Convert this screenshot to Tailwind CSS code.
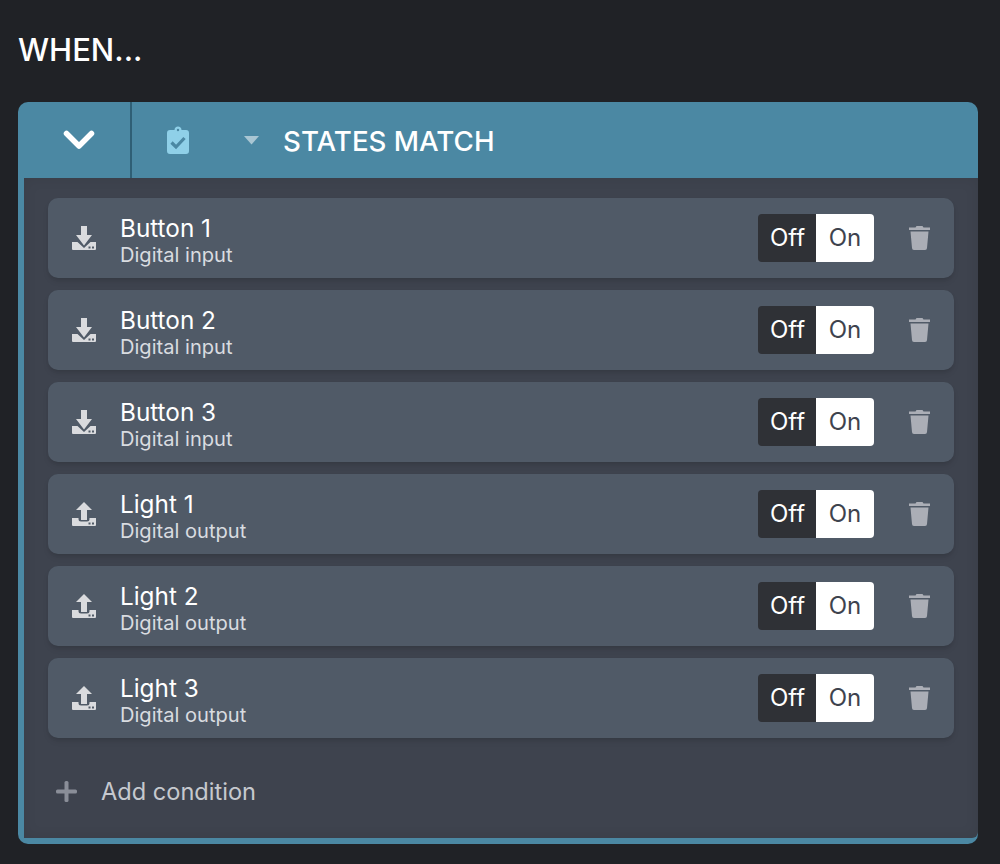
<!DOCTYPE html>
<html lang="en">
<head>
  <meta charset="UTF-8">
  <title>When states match</title>
  <script src="https://cdn.jsdelivr.net/npm/@tailwindcss/browser@4"></script>
</head>
<body class="bg-[#202226] h-[864px] overflow-hidden font-['Inter',sans-serif] text-white">
  <div class="h-[102px] px-[18px] pt-[31px]">
    <h1 class="text-[31px] leading-[38px] font-[550]">WHEN...</h1>
  </div>

  <div class="mx-[18px] w-[960px] h-[742px] rounded-[10px] bg-[#4b88a3] flex flex-col overflow-hidden">
    <!-- header -->
    <div class="h-[76px] flex items-center shrink-0">
      <div class="w-[114px] h-full pl-[10px] flex items-center justify-center border-r-2 border-[#2f5f75]">
        <svg width="32" height="20" viewBox="0 0 32 20" fill="none" stroke="#fff" stroke-width="5.500" stroke-linecap="round" stroke-linejoin="round"><path d="M3.500 3.500 16 16 28.500 3.500"/></svg>
      </div>
      <svg class="ml-[35px]" width="22" height="28" viewBox="0 0 22 28"><path fill="#8fd0e8" fill-rule="evenodd" d="M7.500 4C7.500 2 9 .5 11 .5S14.500 2 14.500 4H19a3 3 0 0 1 3 3v18a3 3 0 0 1-3 3H3a3 3 0 0 1-3-3V7a3 3 0 0 1 3-3ZM11 2.800a1.200 1.200 0 1 0 0 2.400 1.200 1.200 0 0 0 0-2.400Z"/><path fill="none" stroke="#4b88a3" stroke-width="3.200" d="m4.500 16.500 4.500 4.500 8.500-9"/></svg>
      <svg class="ml-[55px]" width="16" height="10" viewBox="0 0 16 10"><path fill="#a9c6d3" d="M0 1h15L7.500 9.500Z"/></svg>
      <span class="ml-[23px] pt-[3px] text-[27.700px] leading-none font-[550]">STATES MATCH</span>
    </div>

    <!-- body -->
    <div class="ml-[6px] mb-[6px] flex-1 bg-[#3e434e] pt-[20px] pl-[24px] pr-[24px] rounded-br-[6px] shadow-[inset_0_0_14px_rgba(0,0,0,0.08)]">
      <div class="flex flex-col gap-[12px]">

        <div class="h-[80px] rounded-[10px] bg-[#505a67] shadow-md flex items-center pl-[24px] pr-[24px]">
          <svg width="24" height="24" viewBox="0 0 24 24" fill="#dadbde"><path d="M9 0h6v9h5l-8 10.500L4 9h5Z"/><path fill-rule="evenodd" d="M0 16h5.500l6.500 6 6.500-6H24v7a1 1 0 0 1-1 1H1a1 1 0 0 1-1-1ZM16.500 20.500h2v2h-2ZM20 20.500h2v2h-2Z"/></svg>
          <div class="ml-[24px] pt-[4px] flex-1">
            <div class="text-[24.300px] leading-[30px] text-white">Button 1</div>
            <div class="text-[20.100px] leading-[24px] text-[#d9dce0]">Digital input</div>
          </div>
          <div class="flex h-[48px] w-[116px] text-[24px]">
            <div class="w-[58px] pl-[1px] flex items-center justify-center bg-[#2f3136] rounded-l-[4px] text-white">Off</div>
            <div class="w-[58px] flex items-center justify-center bg-white rounded-r-[4px] text-[#3e434e]">On</div>
          </div>
          <svg class="ml-[35px]" width="21" height="24" viewBox="0 0 21 24" fill="#abaeb6"><path d="M7.500 0h6l1 1.500h6.500V4H0V1.500h6.500Z"/><path d="M1.500 5.500h18L18 22a2 2 0 0 1-2 2H5a2 2 0 0 1-2-2Z"/></svg>
        </div>

        <div class="h-[80px] rounded-[10px] bg-[#505a67] shadow-md flex items-center pl-[24px] pr-[24px]">
          <svg width="24" height="24" viewBox="0 0 24 24" fill="#dadbde"><path d="M9 0h6v9h5l-8 10.500L4 9h5Z"/><path fill-rule="evenodd" d="M0 16h5.500l6.500 6 6.500-6H24v7a1 1 0 0 1-1 1H1a1 1 0 0 1-1-1ZM16.500 20.500h2v2h-2ZM20 20.500h2v2h-2Z"/></svg>
          <div class="ml-[24px] pt-[4px] flex-1">
            <div class="text-[24.300px] leading-[30px] text-white">Button 2</div>
            <div class="text-[20.100px] leading-[24px] text-[#d9dce0]">Digital input</div>
          </div>
          <div class="flex h-[48px] w-[116px] text-[24px]">
            <div class="w-[58px] pl-[1px] flex items-center justify-center bg-[#2f3136] rounded-l-[4px] text-white">Off</div>
            <div class="w-[58px] flex items-center justify-center bg-white rounded-r-[4px] text-[#3e434e]">On</div>
          </div>
          <svg class="ml-[35px]" width="21" height="24" viewBox="0 0 21 24" fill="#abaeb6"><path d="M7.500 0h6l1 1.500h6.500V4H0V1.500h6.500Z"/><path d="M1.500 5.500h18L18 22a2 2 0 0 1-2 2H5a2 2 0 0 1-2-2Z"/></svg>
        </div>

        <div class="h-[80px] rounded-[10px] bg-[#505a67] shadow-md flex items-center pl-[24px] pr-[24px]">
          <svg width="24" height="24" viewBox="0 0 24 24" fill="#dadbde"><path d="M9 0h6v9h5l-8 10.500L4 9h5Z"/><path fill-rule="evenodd" d="M0 16h5.500l6.500 6 6.500-6H24v7a1 1 0 0 1-1 1H1a1 1 0 0 1-1-1ZM16.500 20.500h2v2h-2ZM20 20.500h2v2h-2Z"/></svg>
          <div class="ml-[24px] pt-[4px] flex-1">
            <div class="text-[24.300px] leading-[30px] text-white">Button 3</div>
            <div class="text-[20.100px] leading-[24px] text-[#d9dce0]">Digital input</div>
          </div>
          <div class="flex h-[48px] w-[116px] text-[24px]">
            <div class="w-[58px] pl-[1px] flex items-center justify-center bg-[#2f3136] rounded-l-[4px] text-white">Off</div>
            <div class="w-[58px] flex items-center justify-center bg-white rounded-r-[4px] text-[#3e434e]">On</div>
          </div>
          <svg class="ml-[35px]" width="21" height="24" viewBox="0 0 21 24" fill="#abaeb6"><path d="M7.500 0h6l1 1.500h6.500V4H0V1.500h6.500Z"/><path d="M1.500 5.500h18L18 22a2 2 0 0 1-2 2H5a2 2 0 0 1-2-2Z"/></svg>
        </div>

        <div class="h-[80px] rounded-[10px] bg-[#505a67] shadow-md flex items-center pl-[24px] pr-[24px]">
          <svg width="24" height="24" viewBox="0 0 24 24" fill="#dadbde"><path d="M12 0l8 8h-5v10H9V8H4Z"/><path fill-rule="evenodd" d="M0 16h6.500v1a2.500 2.500 0 0 0 2.500 2.500h6a2.500 2.500 0 0 0 2.500-2.500v-1H24v7a1 1 0 0 1-1 1H1a1 1 0 0 1-1-1ZM16.500 20.500h2v2h-2ZM20 20.500h2v2h-2Z"/></svg>
          <div class="ml-[24px] pt-[4px] flex-1">
            <div class="text-[24.300px] leading-[30px] text-white">Light 1</div>
            <div class="text-[20.100px] leading-[24px] text-[#d9dce0]">Digital output</div>
          </div>
          <div class="flex h-[48px] w-[116px] text-[24px]">
            <div class="w-[58px] pl-[1px] flex items-center justify-center bg-[#2f3136] rounded-l-[4px] text-white">Off</div>
            <div class="w-[58px] flex items-center justify-center bg-white rounded-r-[4px] text-[#3e434e]">On</div>
          </div>
          <svg class="ml-[35px]" width="21" height="24" viewBox="0 0 21 24" fill="#abaeb6"><path d="M7.500 0h6l1 1.500h6.500V4H0V1.500h6.500Z"/><path d="M1.500 5.500h18L18 22a2 2 0 0 1-2 2H5a2 2 0 0 1-2-2Z"/></svg>
        </div>

        <div class="h-[80px] rounded-[10px] bg-[#505a67] shadow-md flex items-center pl-[24px] pr-[24px]">
          <svg width="24" height="24" viewBox="0 0 24 24" fill="#dadbde"><path d="M12 0l8 8h-5v10H9V8H4Z"/><path fill-rule="evenodd" d="M0 16h6.500v1a2.500 2.500 0 0 0 2.500 2.500h6a2.500 2.500 0 0 0 2.500-2.500v-1H24v7a1 1 0 0 1-1 1H1a1 1 0 0 1-1-1ZM16.500 20.500h2v2h-2ZM20 20.500h2v2h-2Z"/></svg>
          <div class="ml-[24px] pt-[4px] flex-1">
            <div class="text-[24.300px] leading-[30px] text-white">Light 2</div>
            <div class="text-[20.100px] leading-[24px] text-[#d9dce0]">Digital output</div>
          </div>
          <div class="flex h-[48px] w-[116px] text-[24px]">
            <div class="w-[58px] pl-[1px] flex items-center justify-center bg-[#2f3136] rounded-l-[4px] text-white">Off</div>
            <div class="w-[58px] flex items-center justify-center bg-white rounded-r-[4px] text-[#3e434e]">On</div>
          </div>
          <svg class="ml-[35px]" width="21" height="24" viewBox="0 0 21 24" fill="#abaeb6"><path d="M7.500 0h6l1 1.500h6.500V4H0V1.500h6.500Z"/><path d="M1.500 5.500h18L18 22a2 2 0 0 1-2 2H5a2 2 0 0 1-2-2Z"/></svg>
        </div>

        <div class="h-[80px] rounded-[10px] bg-[#505a67] shadow-md flex items-center pl-[24px] pr-[24px]">
          <svg width="24" height="24" viewBox="0 0 24 24" fill="#dadbde"><path d="M12 0l8 8h-5v10H9V8H4Z"/><path fill-rule="evenodd" d="M0 16h6.500v1a2.500 2.500 0 0 0 2.500 2.500h6a2.500 2.500 0 0 0 2.500-2.500v-1H24v7a1 1 0 0 1-1 1H1a1 1 0 0 1-1-1ZM16.500 20.500h2v2h-2ZM20 20.500h2v2h-2Z"/></svg>
          <div class="ml-[24px] pt-[4px] flex-1">
            <div class="text-[24.300px] leading-[30px] text-white">Light 3</div>
            <div class="text-[20.100px] leading-[24px] text-[#d9dce0]">Digital output</div>
          </div>
          <div class="flex h-[48px] w-[116px] text-[24px]">
            <div class="w-[58px] pl-[1px] flex items-center justify-center bg-[#2f3136] rounded-l-[4px] text-white">Off</div>
            <div class="w-[58px] flex items-center justify-center bg-white rounded-r-[4px] text-[#3e434e]">On</div>
          </div>
          <svg class="ml-[35px]" width="21" height="24" viewBox="0 0 21 24" fill="#abaeb6"><path d="M7.500 0h6l1 1.500h6.500V4H0V1.500h6.500Z"/><path d="M1.500 5.500h18L18 22a2 2 0 0 1-2 2H5a2 2 0 0 1-2-2Z"/></svg>
        </div>
      </div>

      <!-- add -->
      <div class="mt-[39px] flex items-center pl-[8px] h-[28px]">
        <svg width="21" height="21" viewBox="0 0 21 21" fill="#8a8e98"><rect x="8.500" y="0" width="4" height="21" rx="1.500"/><rect x="0" y="8.500" width="21" height="4" rx="1.500"/></svg>
        <span class="ml-[24px] pt-[1px] text-[23.600px] text-[#c6c9ce]">Add condition</span>
      </div>
    </div>
  </div>
</body>
</html>
